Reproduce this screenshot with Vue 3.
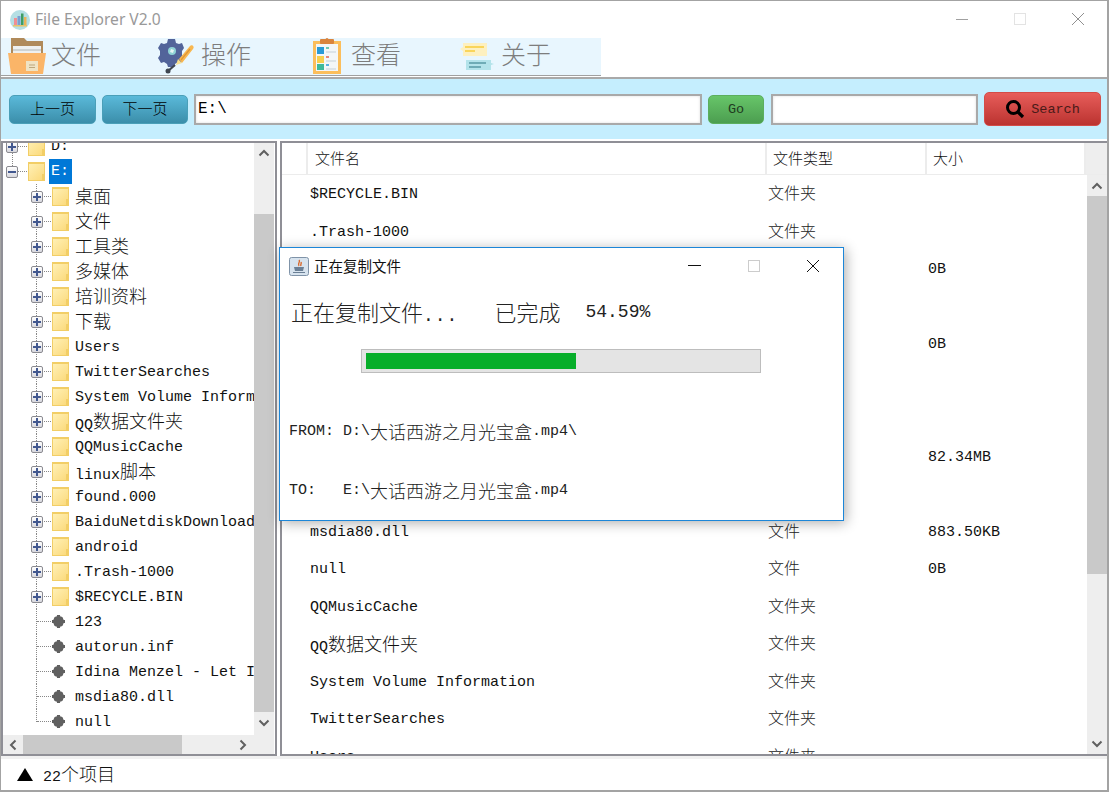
<script setup>
const CJK = /([\u2e80-\u9fff\uff00-\uffef]+)/
function runs(t) {
  return t.split(CJK).filter(Boolean).map((s) => ({ s, cjk: CJK.test(s) }))
}
const tree = ['桌面','文件','工具类','多媒体','培训资料','下载','Users','TwitterSearches','System Volume Information','QQ数据文件夹','QQMusicCache','linux脚本','found.000','BaiduNetdiskDownload','android','.Trash-1000','$RECYCLE.BIN']
const leaves = ['123','autorun.inf','Idina Menzel - Let It Go.mp3','msdia80.dll','null']
const files = [
  ['$RECYCLE.BIN','文件夹',''],['.Trash-1000','文件夹',''],['123','文件','0B'],['android','文件夹',''],
  ['autorun.inf','文件','0B'],['BaiduNetdiskDownload','文件夹',''],['found.000','文件夹',''],
  ['Idina Menzel - Let It Go.mp3','文件','82.34MB'],['linux脚本','文件夹',''],['msdia80.dll','文件','883.50KB'],
  ['null','文件','0B'],['QQMusicCache','文件夹',''],['QQ数据文件夹','文件夹',''],
  ['System Volume Information','文件夹',''],['TwitterSearches','文件夹',''],['Users','文件夹','']
]
const progress = 54.59
</script>

<template>
  <div class="window">
    <header class="titlebar">
      <svg class="appicon" viewBox="0 0 20 20" width="20" height="20">
        <circle cx="10" cy="10" r="10" fill="#b5dfe4"/>
        <rect x="4" y="8" width="3" height="7" fill="#ee8f95"/>
        <rect x="7.5" y="6" width="3" height="9" fill="#7a9fd0"/>
        <rect x="11" y="3.5" width="2.5" height="11.5" fill="#3f9d62"/>
        <rect x="14" y="7" width="2.5" height="8" fill="#e8b45a"/>
        <rect x="3" y="15" width="14" height="1.5" fill="#e8c46a"/>
      </svg>
      <span class="apptitle">File Explorer V2.0</span>
      <div class="winctl">
        <svg width="14" height="14" viewBox="0 0 14 14"><path d="M1 7.5h12" stroke="#a0a0a0"/></svg>
        <svg width="14" height="14" viewBox="0 0 14 14"><rect x="1.5" y="1.5" width="11" height="11" fill="none" stroke="#e3e3e3"/></svg>
        <svg width="14" height="14" viewBox="0 0 14 14"><path d="M1 1l12 12M13 1L1 13" stroke="#909090"/></svg>
      </div>
    </header>

    <nav class="menubar">
      <div class="menuitem m1">
        <svg width="38" height="36" viewBox="0 0 38 36">
          <path d="M3 0h13l3 3h16v13H3z" fill="#b08a5a"/>
          <rect x="5" y="8" width="28" height="8" fill="#eef0f0"/>
          <rect x="5" y="11" width="28" height="2" fill="#cfd3d3"/>
          <path d="M0 15h38l-3 21H3z" fill="#fbb568"/>
          <rect x="18" y="23" width="12" height="10" fill="#efe3c4"/>
          <path d="M21 27h6M21 29.500h6" stroke="#bda77c"/>
        </svg>
        <span>文件</span>
      </div>
      <div class="menuitem m2">
        <svg width="38" height="36" viewBox="0 0 38 36">
          <path d="M10 1h7l1 4 3 1 3-1 2 5-2 3v4l2 3-3 5-3-1-3 2-1 3h-6l-1-3-3-2-3 1-3-5 2-3v-4L0 10l3-5 3 1 3-1z" fill="#52649a"/>
          <circle cx="14" cy="13" r="4" fill="#8fd3d6"/>
          <path d="M13 11l3 1-1 3-3-1z" fill="#e6f4f4"/>
          <path d="M21 21L32 8c2-2 5 1 3 3L24 25z" fill="#f8b750"/>
          <path d="M32 11l-9 11" stroke="#df9535" stroke-width="1.200"/>
          <path d="M20 21l4 4-6 2z" fill="#f7e08f"/>
          <path d="M17 27l-7 6" stroke="#3f4650" stroke-width="2.200"/>
          <circle cx="10" cy="33" r="2.500" fill="#3f4650"/>
        </svg>
        <span>操作</span>
      </div>
      <div class="menuitem m3">
        <svg width="28" height="36" viewBox="0 0 28 36">
          <rect x="0" y="3" width="28" height="33" fill="#fbbe5c"/>
          <rect x="3" y="6" width="22" height="27" fill="#f3f6f8"/>
          <rect x="7" y="1" width="14" height="5" rx="1" fill="#d9843e"/>
          <circle cx="14" cy="1.500" r="1.500" fill="#d9843e"/>
          <rect x="4" y="9" width="7" height="7" fill="#2a9ad6"/>
          <rect x="4" y="18" width="7" height="7" fill="#f8cf4e"/>
          <rect x="4" y="26" width="7" height="6" fill="#3fb99a"/>
          <path d="M13 14h10M13 23h10M13 31h10" stroke="#d5dde2" stroke-width="1.500"/>
          <path d="M13 10h3" stroke="#3fb99a" stroke-width="1.500"/>
          <path d="M13 19h3" stroke="#e2604e" stroke-width="1.500"/>
          <path d="M13 27h3" stroke="#2a9ad6" stroke-width="1.500"/>
        </svg>
        <span>查看</span>
      </div>
      <div class="menuitem m4">
        <svg width="34" height="27" viewBox="0 0 34 27">
          <path d="M3 0h24v13H3V8L0 6l3-2z" fill="#fdf0c0"/>
          <path d="M5 4h19M5 8h10" stroke="#f8cb3a" stroke-width="1.500"/>
          <path d="M6 17h25v3l3 1-3 1v5H6z" fill="#b3e3ea"/>
          <path d="M9 20h17M9 24h12" stroke="#5a9aa5" stroke-width="1.500"/>
        </svg>
        <span>关于</span>
      </div>
    </nav>

    <section class="toolbar">
      <button class="btn nav">上一页</button>
      <button class="btn nav next">下一页</button>
      <div class="input path">E:\</div>
      <button class="btn go">Go</button>
      <div class="input query"></div>
      <button class="btn search">
        <svg width="20" height="20" viewBox="0 0 20 20"><circle cx="8.500" cy="8.500" r="6" fill="none" stroke="#000" stroke-width="3"/><path d="M13 13l5 5" stroke="#000" stroke-width="3.200"/></svg>
        <span>Search</span>
      </button>
    </section>

    <main class="panes">
      <aside class="treepane">
        <div class="treeview">
          <div class="trow root first">
            <i class="box"><b class="hbar"></b><b class="vbar"></b></i>
            <i class="folder"></i>
            <span class="label">D:</span>
          </div>
          <div class="trow root">
            <i class="box"><b class="hbar"></b></i>
            <i class="folder"></i>
            <span class="label selected">E:</span>
          </div>
          <div v-for="t in tree" :key="t" class="trow child">
            <i class="box"><b class="hbar"></b><b class="vbar"></b></i>
            <i class="folder"></i>
            <span class="label"><span v-for="(r, i) in runs(t)" :key="i" :class="{ cjk: r.cjk }">{{ r.s }}</span></span>
          </div>
          <div v-for="(t, n) in leaves" :key="t" class="trow leaf" :class="{ last: n === leaves.length - 1 }">
            <i class="dot"></i>
            <span class="label">{{ t }}</span>
          </div>
        </div>
        <div class="vscroll left">
          <svg class="chev up" width="12" height="8" viewBox="0 0 12 8"><path d="M1.500 6.500L6 2l4.500 4.500" fill="none" stroke="#606060" stroke-width="2"/></svg>
          <div class="track"><div class="spacer s1"></div><div class="thumb"></div></div>
          <svg class="chev down" width="12" height="8" viewBox="0 0 12 8"><path d="M1.500 1.500L6 6l4.500-4.500" fill="none" stroke="#606060" stroke-width="2"/></svg>
        </div>
        <div class="hscroll">
          <svg width="8" height="12" viewBox="0 0 8 12"><path d="M6.500 1.500L2 6l4.500 4.500" fill="none" stroke="#606060" stroke-width="2"/></svg>
          <div class="hthumb"></div>
          <svg width="8" height="12" viewBox="0 0 8 12"><path d="M1.500 1.500L6 6l-4.500 4.500" fill="none" stroke="#606060" stroke-width="2"/></svg>
        </div>
      </aside>

      <section class="listpane">
        <div class="listmain">
          <div class="thead">
            <div class="th c0"></div>
            <div class="th c1 cjk">文件名</div>
            <div class="th c2 cjk">文件类型</div>
            <div class="th c3 cjk">大小</div>
            <div class="corner"></div>
          </div>
          <div class="tbody">
            <div v-for="f in files" :key="f[0]" class="tr">
              <div class="td n"><span v-for="(r, i) in runs(f[0])" :key="i" :class="{ cjk: r.cjk }">{{ r.s }}</span></div>
              <div class="td t cjk">{{ f[1] }}</div>
              <div class="td s">{{ f[2] }}</div>
            </div>
          </div>
        </div>
        <div class="vscroll right">
          <svg class="chev up" width="12" height="8" viewBox="0 0 12 8"><path d="M1.500 6.500L6 2l4.500 4.500" fill="none" stroke="#606060" stroke-width="2"/></svg>
          <div class="track"><div class="thumb"></div></div>
          <svg class="chev down" width="12" height="8" viewBox="0 0 12 8"><path d="M1.500 1.500L6 6l4.500-4.500" fill="none" stroke="#606060" stroke-width="2"/></svg>
        </div>
      </section>
    </main>

    <footer class="status">
      <svg width="16" height="13" viewBox="0 0 16 13"><path d="M8 0l8 13H0z" fill="#000"/></svg>
      <span>22<span class="cjk">个项目</span></span>
    </footer>

    <div class="dialog">
      <div class="dtitle">
        <svg width="20" height="19" viewBox="0 0 20 19">
          <rect x="0.500" y="0.500" width="19" height="18" rx="2" fill="#d7e3ee" stroke="#7f93a8"/>
          <path d="M10 3c2 2-2 3 0 6M12 5c1 2-1 2 0 4" stroke="#d9682a" fill="none" stroke-width="1.400"/>
          <path d="M5 10h10l-1 4H6z" fill="#6a7f95"/>
          <path d="M4 15.500h12" stroke="#6a7f95"/>
        </svg>
        <span class="dname">正在复制文件</span>
        <div class="dctl">
          <svg width="14" height="14" viewBox="0 0 14 14"><path d="M0 6.500h13" stroke="#111"/></svg>
          <svg width="14" height="14" viewBox="0 0 14 14"><rect x="1.500" y="1.500" width="11" height="11" fill="none" stroke="#ccc"/></svg>
          <svg width="14" height="14" viewBox="0 0 14 14"><path d="M1 1l12 12M13 1L1 13" stroke="#111"/></svg>
        </div>
      </div>
      <div class="dhead">
        <span class="cjk big">正在复制文件</span><span class="dots">...</span>
        <span class="cjk big done">已完成</span>
        <span class="pct">54.59%</span>
      </div>
      <div class="bar"><div class="fill" :style="{ width: progress + '%' }"></div></div>
      <div class="line from"><span class="lab">FROM:</span><span>D:\</span><span class="cjk">大话西游之月光宝盒</span><span>.mp4\</span></div>
      <div class="line to"><span class="lab">TO:</span><span>E:\</span><span class="cjk">大话西游之月光宝盒</span><span>.mp4</span></div>
    </div>
  </div>
</template>

<style>
html, body { margin: 0; background: #fff; overflow: hidden; }
</style>

<style scoped>
.window {
  position: relative; box-sizing: border-box; width: 1109px; height: 792px;
  border: 1px solid #a3a3a3; border-width: 1px 2px 2px 1px;
  display: flex; flex-direction: column; overflow: hidden; background: #fff;
  font: 15px/1 "Liberation Mono", "Noto Sans CJK SC", monospace; color: #111;
}
.cjk { font-family: "Noto Sans CJK SC", sans-serif; font-size: 18px; font-weight: 300; }
.titlebar { height: 37px; flex: none; display: flex; align-items: center; padding-left: 9px; }
.apptitle { font: 15.6px "Noto Sans", sans-serif; color: #999; margin: -2px 0 0 5px; }
.winctl { margin-left: auto; display: flex; gap: 44px; margin-right: 22px; margin-top: -1px; }
.menubar {
  height: 37px; width: 593px; flex: none; background: #e8f6fe; border-bottom: 1px solid #a0a0a0;
  display: flex; align-items: flex-start; padding-left: 7px; box-sizing: content-box;
}
.menuitem { display: flex; align-items: center; color: #7d7d7d; font: 300 25px/36px "Noto Sans CJK SC", sans-serif; height: 36px; }
.menuitem span { margin-top: -6px; }
.m1 { width: 150px; gap: 5px; }
.m2 { width: 155px; gap: 5px; }
.m3 { width: 147px; gap: 10px; }
.m4 { gap: 7px; }
.toolbar {
  flex: none; height: 62px; margin-top: 1px; background: #c5eefe; border-top: 2px solid #a9a9a9;
  box-sizing: border-box; display: flex; align-items: center; gap: 6px; padding: 0 0 0 8px;
}
.btn {
  box-sizing: border-box; border: 1px solid #4a9fb8; border-radius: 5px; height: 29px; padding: 0;
  font: 300 15px "Noto Sans CJK SC", sans-serif; color: #111;
  display: flex; align-items: center; justify-content: center;
}
.nav { width: 87px; background: linear-gradient(#5ab9d9, #3b8eaa); padding-bottom: 4px; color: #000; }
.nav.next { width: 86px; }
.input {
  box-sizing: border-box; height: 31px; border: 2px solid #a9a9a9; background: #fff;
  box-shadow: inset 0 0 3px #ddd; line-height: 27px; padding-left: 2px;
}
.path { width: 508px; font-size: 16px; color: #000; }
.go {
  width: 56px; background: linear-gradient(#67c569, #4c9e50); border-color: #5cae5e;
  font: 13.5px "Liberation Mono", monospace; color: #1f3a20;
}
.query { width: 207px; margin-left: 1px; }
.search {
  width: 117px; height: 34px; background: linear-gradient(#e75d5a, #bb3330); border-color: #d34c48;
  font: 13.5px "Liberation Mono", monospace; gap: 6px; color: #4a1a18;
}
.panes { flex: 1; min-height: 0; display: flex; gap: 3px; border-top: 2px solid #fff; }
.treepane {
  position: relative; box-sizing: border-box; width: 276px; flex: none;
  border: 2px solid #8f8f96; overflow: hidden; background: #fff;
}
.treeview { position: absolute; left: 0; top: 0; bottom: 19px; width: 251px; overflow: hidden; }
.trow { height: 25px; position: relative; display: flex; align-items: center; white-space: nowrap; }
.first { margin-top: -9px; }
.trow::before { content: ""; position: absolute; border-left: 1px dotted #888; top: 0; bottom: 0; }
.trow::after { content: ""; position: absolute; border-top: 1px dotted #888; top: 12px; height: 0; }
.root::before { left: 9px; top: -12px; bottom: 12px; }
.root.first::before { display: none; }
.root::after { left: 10px; width: 14px; }
.child::before, .leaf::before { left: 33px; }
.child::after, .leaf::after { left: 34px; width: 14px; }
.leaf.last::before { bottom: 12px; }
.box {
  position: absolute; box-sizing: border-box; width: 12px; height: 12px; top: 7px; z-index: 1;
  border: 1px solid #8a8a90; border-radius: 2px; background: linear-gradient(#fff, #d8d8de);
}
.root .box { left: 3px; }
.child .box { left: 28px; }
.hbar { position: absolute; left: 1px; right: 1px; top: 4px; height: 2px; background: #42588f; }
.vbar { position: absolute; top: 1px; bottom: 1px; left: 4px; width: 2px; background: #42588f; }
.folder {
  position: absolute; box-sizing: border-box; width: 17px; height: 19px; top: 3px; z-index: 1;
  background: linear-gradient(135deg, #fff0b5, #fbd97a); border: 2px solid #f2ce66; border-width: 2px 1px 1px 1px;
}
.folder::after { content: ""; position: absolute; right: -1px; bottom: -1px; width: 3px; height: 7px; background: #f2ce66; }
.root .folder { left: 25px; }
.child .folder { left: 49px; }
.label { position: absolute; font-size: 15px; line-height: 25px; color: #111; }
.root .label { left: 46px; padding: 0 2px; width: 19px; }
.selected { background: #0078d7; color: #fff !important; width: 19px; }
.child .label, .leaf .label { left: 72px; padding-top: 2px; }
.label .cjk { vertical-align: 1px; }
.dot {
  position: absolute; left: 49px; top: 6px; width: 13px; height: 13px; z-index: 1; background: #606060;
  clip-path: polygon(38% 0, 62% 0, 62% 10%, 80% 15%, 90% 38%, 100% 38%, 100% 62%, 90% 62%, 80% 85%, 62% 90%, 62% 100%, 38% 100%, 38% 90%, 20% 85%, 10% 62%, 0 62%, 0 38%, 10% 38%, 20% 15%, 38% 10%);
}
.vscroll { background: #eeeeee; display: flex; flex-direction: column; align-items: center; width: 20px; flex: none; }
.vscroll.left { position: absolute; right: 1px; top: 0; bottom: 19px; }
.chev { flex: none; }
.left .chev.up { margin: 6px 0; }
.left .chev.down { margin: 4px 0 8px; }
.right .chev.up { margin: 7px 0 6px; }
.right .chev.down { margin: 6px 0; }
.track { flex: 1; width: 100%; display: flex; flex-direction: column; min-height: 0; }
.left .s1 { height: 51px; flex: none; }
.left .thumb { height: 498px; background: #c9c9c9; }
.right .thumb { height: 378px; background: #c9c9c9; }
.hscroll {
  position: absolute; left: 0; right: 1px; bottom: 0; height: 19px; background: #eeeeee;
  display: flex; align-items: center; padding: 0 27px 0 6px;
}
.hthumb { width: 159px; height: 19px; background: #c9c9c9; margin: 0 auto 0 6px; }
.listpane {
  flex: 1; min-width: 0; display: flex; border: 2px solid #8f8f96; border-right: 0; box-sizing: border-box; overflow: hidden; background: #fff;
}
.listmain { flex: 1; min-width: 0; display: flex; flex-direction: column; overflow: hidden; }
.thead { display: flex; height: 31px; flex: none; border-bottom: 1px solid #ececec; position: relative; z-index: 1; background: #fff; width: 825px; }
.listmain { overflow: visible; }
.tbody { overflow: hidden; }
.th { box-sizing: border-box; border-right: 2px solid #ececec; line-height: 29px; color: #111; }
.c0 { width: 26px; }
.c1 { width: 459px; padding-left: 7px; font-size: 15px; }
.c2 { width: 160px; padding-left: 6px; font-size: 15px; }
.c3 { width: 159px; padding-left: 6px; font-size: 15px; }
.corner { flex: 1; background: #eeeeee; }
.tbody { flex: 1; min-height: 0; padding-top: 1px; }
.tr { height: 37.5px; display: flex; align-items: center; }
.td { white-space: nowrap; }
.n { width: 486px; padding-left: 28px; box-sizing: border-box; }
.t { width: 160px; font-size: 16px; color: #222; margin-top: -5px; }
.s { width: 150px; }
.right.vscroll { margin-top: 32px; }
.status {
  flex: none; height: 34px; border-top: 3px solid #f1f1f1; display: flex; align-items: center; gap: 10px; padding-left: 16px;
  font-size: 15px; box-sizing: border-box;
}
.dialog {
  position: absolute; left: 278px; top: 246px; width: 565px; height: 274px; box-sizing: border-box;
  background: #fff; border: 1px solid #1c86d8; box-shadow: 2px 2px 12px rgba(0,0,0,.32);
}
.dtitle { position: relative; height: 37px; display: flex; align-items: center; padding-left: 9px; gap: 5px; }
.dname { font: 14.5px "Noto Sans CJK SC", sans-serif; color: #111; margin-top: -2px; }
.dctl { position: absolute; right: 23px; top: 11px; display: flex; gap: 45px; }
.dhead { display: flex; align-items: baseline; height: 24px; margin-top: 15px; padding-left: 11px; color: #222; white-space: nowrap; }
.big { font-size: 22px; }
.dots { font-size: 18px; letter-spacing: 1px; }
.done { margin-left: 36px; }
.pct { margin-left: 25px; font: 18px "Liberation Mono", monospace; align-self: center; }
.bar {
  box-sizing: border-box; width: 400px; height: 24px; margin: 25px 0 0 81px; background: #e4e4e4;
  border: 1px solid #bdbdbd; padding: 3px 4px;
}
.fill { height: 100%; background: #07ae2a; max-width: 210px; }
.line { position: absolute; left: 9px; display: flex; align-items: center; white-space: nowrap; color: #222; font-size: 15px; }
.line .cjk { font-size: 18px; }
.from { top: 174px; }
.to { top: 233px; }
.lab { width: 54px; }
</style>
